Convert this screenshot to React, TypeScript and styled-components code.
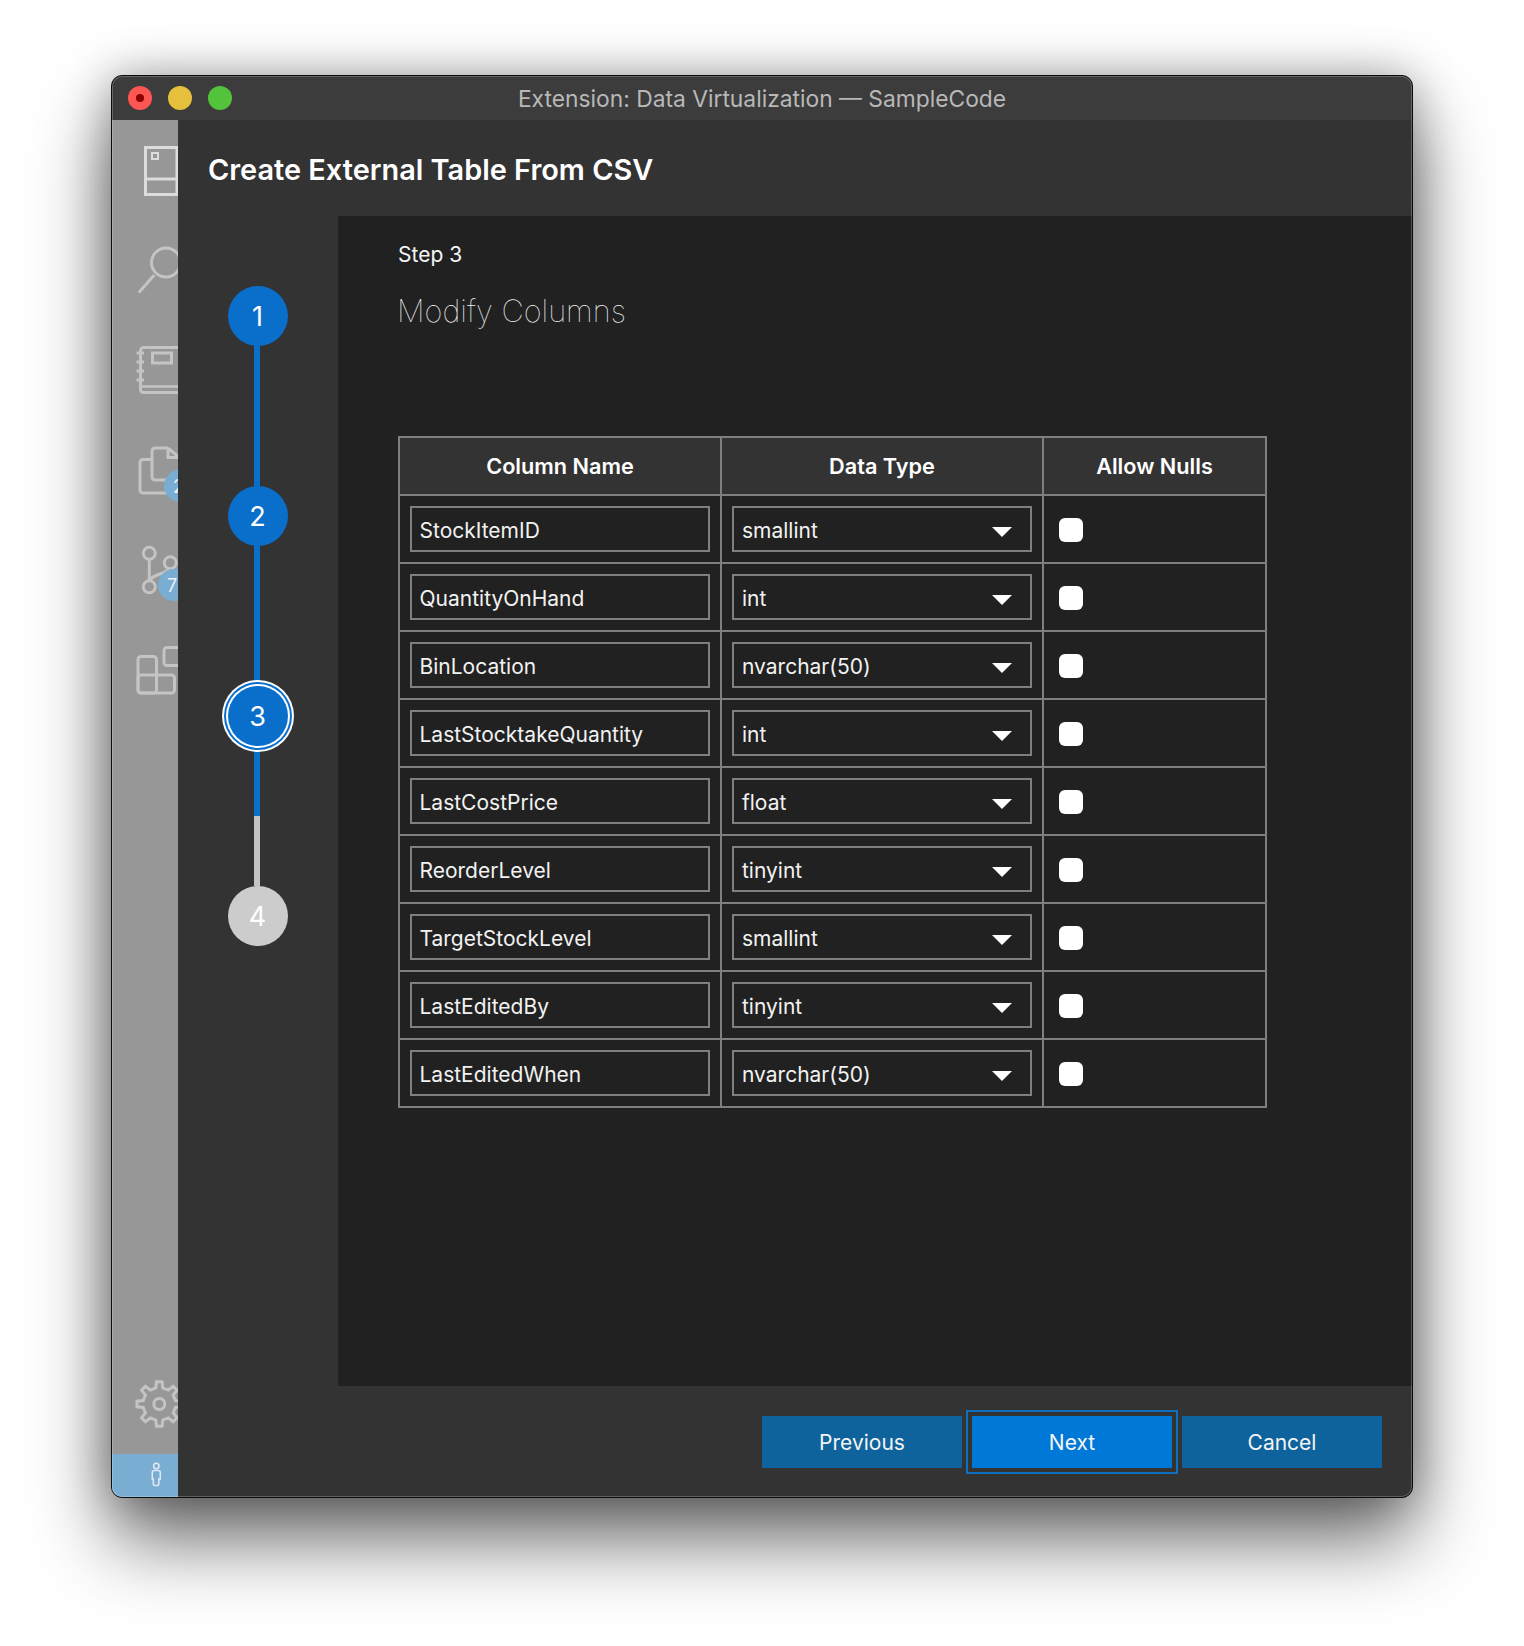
import React from "react";
import styled, { createGlobalStyle } from "styled-components";

const Global = createGlobalStyle`
  html, body { margin: 0; padding: 0; background: #fff; }
  body { font-family: Inter, "Noto Sans", sans-serif; -webkit-font-smoothing: antialiased; }
`;

const Page = styled.div`
  width: 1524px;
  height: 1646px;
  padding: 75px 0 0 111px;
  box-sizing: border-box;
  overflow: hidden;
`;

const Win = styled.div`
  position: relative;
  width: 1302px;
  height: 1423px;
  box-sizing: border-box;
  border: 1px solid #0c0c0c;
  border-radius: 11px;
  overflow: hidden;
  display: flex;
  flex-direction: column;
  background: #333;
  box-shadow: 0 42px 78px rgba(0, 0, 0, 0.58), 0 0 46px rgba(0, 0, 0, 0.3);
  &::after {
    content: "";
    position: absolute;
    inset: 0;
    border-radius: 10px;
    box-shadow: inset 0 0 0 1px rgba(255, 255, 255, 0.22);
    pointer-events: none;
  }
`;

const TitleBar = styled.div`
  position: relative;
  flex: 0 0 44px;
  background: #3c3c3c;
  display: flex;
  align-items: center;
  justify-content: center;
  color: #b8b8b8;
  font-size: 22.8px;
`;

const Lights = styled.div`
  position: absolute;
  left: 16px;
  top: 10px;
  display: flex;
  gap: 16px;
`;

const Light = styled.span<{ $c: string; $dot?: boolean }>`
  width: 24px;
  height: 24px;
  border-radius: 50%;
  background: ${(p) => p.$c};
  display: flex;
  align-items: center;
  justify-content: center;
  &::after {
    content: "";
    width: 8px;
    height: 8px;
    border-radius: 50%;
    background: ${(p) => (p.$dot ? "#8c0000" : "transparent")};
  }
`;

const Body = styled.div`
  flex: 1;
  display: flex;
  min-height: 0;
`;

const Sidebar = styled.nav`
  flex: 0 0 66px;
  background: #979797;
  display: flex;
  flex-direction: column;
  overflow: hidden;
`;

const IconList = styled.div`
  flex: 1;
  display: flex;
  flex-direction: column;
`;

const Slot = styled.div`
  position: relative;
  height: 100px;
  width: 66px;
  overflow: hidden;
  flex: none;
`;

const Icon = styled.svg<{ $c?: string; $w?: number }>`
  display: block;
  fill: none;
  stroke: ${(p) => p.$c || "#c4c4c4"};
  stroke-width: ${(p) => p.$w || 3}px;
`;

const Badge = styled.span<{ $left: number; $top: number }>`
  position: absolute;
  left: ${(p) => p.$left}px;
  top: ${(p) => p.$top}px;
  min-width: 32px;
  height: 32px;
  padding: 0 9px;
  box-sizing: border-box;
  border-radius: 16px;
  background: #7aadd2;
  color: #e8f1f7;
  font-size: 18px;
  line-height: 34px;
  white-space: nowrap;
`;

const StatusCorner = styled.div`
  height: 43px;
  background: #7aadd2;
  flex: none;
`;

const Main = styled.main`
  flex: 1;
  display: flex;
  flex-direction: column;
  min-width: 0;
`;

const Header = styled.header`
  flex: 0 0 96px;
  box-sizing: border-box;
  background: #333;
  display: flex;
  align-items: center;
  padding: 2px 0 0 30px;
  color: #fff;
  font-size: 28.9px;
  font-weight: 600;
`;

const Middle = styled.div`
  flex: 0 0 1170px;
  display: flex;
`;

const Stepper = styled.aside`
  flex: 0 0 160px;
  background: #333;
  display: flex;
  flex-direction: column;
  align-items: center;
  padding-top: 70px;
  box-sizing: border-box;
`;

const Circle = styled.div<{ $state: "done" | "current" | "todo" }>`
  flex: none;
  width: 60px;
  height: 60px;
  border-radius: 50%;
  background: ${(p) => (p.$state === "todo" ? "#cccccc" : "#0a6ecb")};
  color: #fff;
  font-size: 27px;
  padding-right: 1px;
  box-sizing: border-box;
  display: flex;
  align-items: center;
  justify-content: center;
  box-shadow: ${(p) =>
    p.$state === "current"
      ? "0 0 0 2px #fff, 0 0 0 4px #0a6ecb, 0 0 0 6px #fff"
      : "none"};
  position: relative;
  z-index: 1;
`;

const Connector = styled.div<{ $half?: boolean }>`
  flex: none;
  width: 6px;
  height: 140px;
  margin-right: 2px;
  background: ${(p) =>
    p.$half
      ? "linear-gradient(#0a6ecb 0 50%, #c4c4c4 50% 100%)"
      : "#0a6ecb"};
`;

const Content = styled.section`
  flex: 1;
  background: #212121;
  padding: 25px 0 0 60px;
  color: #f2f2f2;
`;

const StepLabel = styled.div`
  font-size: 21px;
  line-height: 28px;
  color: #f5f5f5;
`;

const StepTitle = styled.h2`
  margin: 22px 0 0 -1px;
  font-size: 30.8px;
  line-height: 40px;
  font-weight: 100;
  color: #f4f4f4;
`;

const Table = styled.table`
  margin-top: 105px;
  width: 869px;
  border-collapse: collapse;
  table-layout: fixed;
  font-size: 21px;
`;

const HeadCell = styled.th<{ $w: number }>`
  width: ${(p) => p.$w}px;
  height: 56px;
  padding: 0;
  border: 2px solid #7f7f7f;
  background: #333;
  color: #fff;
  font-weight: 600;
  font-size: 21.7px;
`;

const Cell = styled.td`
  height: 66px;
  padding: 0 10px;
  border: 2px solid #7f7f7f;
  box-sizing: content-box;
`;

const CheckCell = styled(Cell)`
  height: 64px;
  padding: 2px 14px 0 15px;
`;

const NameInput = styled.input`
  display: block;
  width: 100%;
  height: 46px;
  box-sizing: border-box;
  border: 2px solid #7f7f7f;
  background: #212121;
  color: #f2f2f2;
  font: inherit;
  padding: 2px 7.5px 0;
  outline: none;
`;

const SelectBox = styled.div`
  height: 46px;
  box-sizing: border-box;
  border: 2px solid #7f7f7f;
  padding: 2px 18px 0 8px;
  display: flex;
  align-items: center;
  justify-content: space-between;
  color: #f2f2f2;
`;

const Arrow = styled.span`
  width: 0;
  height: 0;
  border-left: 10px solid transparent;
  border-right: 10px solid transparent;
  border-top: 10px solid #fff;
  margin-top: 3px;
`;

const Check = styled.input.attrs({ type: "checkbox" })`
  appearance: none;
  display: block;
  margin: 0;
  width: 24px;
  height: 24px;
  border-radius: 6px;
  background: #fff;
`;

const Footer = styled.footer`
  flex: 1;
  background: #333;
  display: flex;
  justify-content: flex-end;
  align-items: flex-start;
  gap: 10px;
  padding: 30px 30px 0 0;
`;

const Btn = styled.button<{ $primary?: boolean }>`
  width: 200px;
  height: 52px;
  border: none;
  padding: 0;
  background: ${(p) => (p.$primary ? "#0078d7" : "#0e639c")};
  color: #f4f4f4;
  font: 400 21px Inter, sans-serif;
  outline: ${(p) => (p.$primary ? "2px solid #0e70c0" : "none")};
  outline-offset: 4px;
`;

const rows: [string, string][] = [
  ["StockItemID", "smallint"],
  ["QuantityOnHand", "int"],
  ["BinLocation", "nvarchar(50)"],
  ["LastStocktakeQuantity", "int"],
  ["LastCostPrice", "float"],
  ["ReorderLevel", "tinyint"],
  ["TargetStockLevel", "smallint"],
  ["LastEditedBy", "tinyint"],
  ["LastEditedWhen", "nvarchar(50)"],
];

function gearPath(cx: number, cy: number, R: number, r: number, teeth: number) {
  const pts: string[] = [];
  const step = (Math.PI * 2) / teeth;
  for (let i = 0; i < teeth; i++) {
    const a = i * step - Math.PI / 2;
    const p = (rad: number, ang: number) =>
      `${(cx + rad * Math.cos(ang)).toFixed(2)} ${(cy + rad * Math.sin(ang)).toFixed(2)}`;
    pts.push(p(r, a - step * 0.27), p(R, a - step * 0.16), p(R, a + step * 0.16), p(r, a + step * 0.27));
  }
  return `M${pts.join("L")}Z`;
}

const SvgSlot = ({ children, h = 100 }: { children: React.ReactNode; h?: number }) => (
  <Icon width={66} height={h} viewBox={`0 0 66 ${h}`}>
    {children}
  </Icon>
);

export default function App() {
  return (
    <Page>
      <Global />
      <Win>
        <TitleBar>
          <Lights>
            <Light $c="#fc5753" $dot />
            <Light $c="#e6bf3c" />
            <Light $c="#53c33c" />
          </Lights>
          Extension: Data Virtualization — SampleCode
        </TitleBar>
        <Body>
          <Sidebar>
            <IconList>
              <Slot>
                <Icon $c="#dcdcdc" width={66} height={100} viewBox="0 0 66 100">
                  <rect x="33.5" y="27.5" width="31.5" height="47" />
                  <path d="M33.5 59H65" />
                  <rect x="40" y="33" width="6" height="6" strokeWidth="2" />
                </Icon>
              </Slot>
              <Slot>
                <SvgSlot>
                  <circle cx="54" cy="42.5" r="14.5" />
                  <path d="M26.7 72.7L42.3 55" />
                </SvgSlot>
              </Slot>
              <Slot>
                <SvgSlot>
                  <rect x="28.5" y="27.5" width="60" height="45" rx="3" />
                  <path d="M28.5 66.5H66" strokeWidth="2.5" />
                  <path d="M24.5 33H32M24.5 42H32M24.5 51H32M24.5 60H32" />
                  <rect x="40.5" y="33" width="19" height="10" />
                </SvgSlot>
              </Slot>
              <Slot>
                <SvgSlot>
                  <path d="M39.5 39.5H31a3 3 0 0 0-3 3V70a3 3 0 0 0 3 3H58" />
                  <path d="M56 28H43a3 3 0 0 0-3 3V57a3 3 0 0 0 3 3H58" />
                  <path d="M56 28L68 38M56 28V37.5H66" />
                </SvgSlot>
                <Badge $left={52} $top={50}>2</Badge>
              </Slot>
              <Slot>
                <SvgSlot>
                  <circle cx="37.3" cy="33.3" r="6" />
                  <circle cx="37.3" cy="66.7" r="6" />
                  <circle cx="58.3" cy="42.7" r="6" />
                  <path d="M37.3 39.3V60.7" />
                  <path d="M38 60C42 54 50 55 56 50" />
                </SvgSlot>
                <Badge $left={46} $top={49}>75</Badge>
              </Slot>
              <Slot>
                <SvgSlot>
                  <rect x="26" y="36.5" width="18.5" height="36.5" rx="3" />
                  <rect x="26" y="55" width="36.5" height="18" rx="3" />
                  <rect x="52" y="27.5" width="30" height="18" rx="3" />
                </SvgSlot>
              </Slot>
            </IconList>
            <Slot>
              <SvgSlot>
                <path d={gearPath(47.3, 50, 22.5, 16.5, 8)} />
                <circle cx="47.3" cy="50" r="5.5" />
              </SvgSlot>
            </Slot>
            <StatusCorner>
              <Icon $c="#dfe9f1" $w={1.6} width={66} height={43} viewBox="0 0 66 43">
                <circle cx="44.3" cy="12" r="2.7" />
                <path d="M40.3 18.5a2 2 0 0 1 2-2h4a2 2 0 0 1 2 2V25h-1.5v5a1.5 1.5 0 0 1-1.5 1.5h-2.5a1.5 1.5 0 0 1-1.5-1.5v-5h-1Z" />
              </Icon>
            </StatusCorner>
          </Sidebar>
          <Main>
            <Header>Create External Table From CSV</Header>
            <Middle>
              <Stepper>
                <Circle $state="done">1</Circle>
                <Connector />
                <Circle $state="done">2</Circle>
                <Connector />
                <Circle $state="current">3</Circle>
                <Connector $half />
                <Circle $state="todo">4</Circle>
              </Stepper>
              <Content>
                <StepLabel>Step 3</StepLabel>
                <StepTitle>Modify Columns</StepTitle>
                <Table>
                  <thead>
                    <tr>
                      <HeadCell $w={320}>Column Name</HeadCell>
                      <HeadCell $w={320}>Data Type</HeadCell>
                      <HeadCell $w={221}>Allow Nulls</HeadCell>
                    </tr>
                  </thead>
                  <tbody>
                    {rows.map(([name, type]) => (
                      <tr key={name}>
                        <Cell>
                          <NameInput defaultValue={name} readOnly />
                        </Cell>
                        <Cell>
                          <SelectBox>
                            {type}
                            <Arrow />
                          </SelectBox>
                        </Cell>
                        <CheckCell>
                          <Check />
                        </CheckCell>
                      </tr>
                    ))}
                  </tbody>
                </Table>
              </Content>
            </Middle>
            <Footer>
              <Btn>Previous</Btn>
              <Btn $primary>Next</Btn>
              <Btn>Cancel</Btn>
            </Footer>
          </Main>
        </Body>
      </Win>
    </Page>
  );
}
